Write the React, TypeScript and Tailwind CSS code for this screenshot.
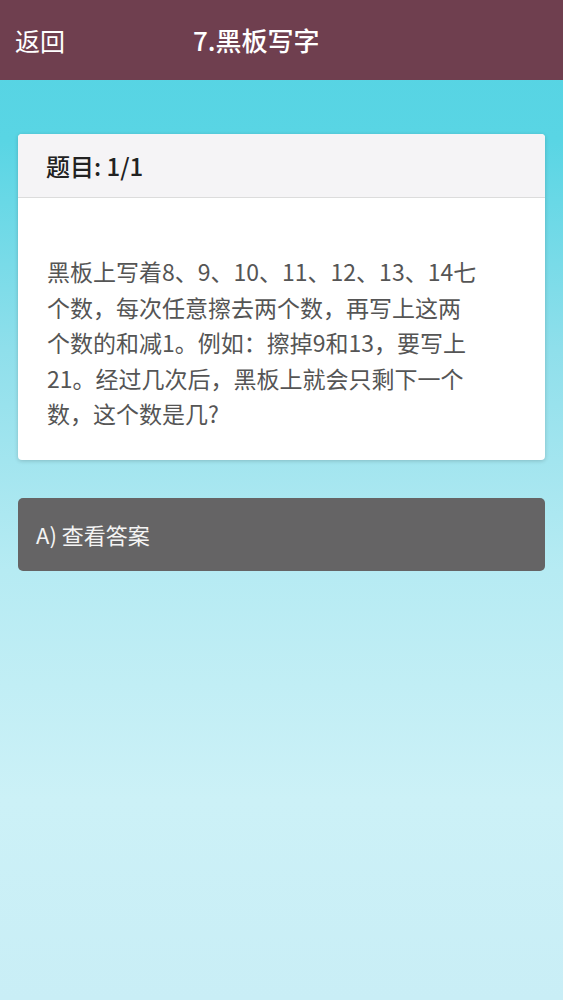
export default function App() {
  const font = { fontFamily: '"Noto Sans CJK SC", "Noto Sans", sans-serif' };
  return (
    <div
      className="w-[563px] h-[1000px] flex flex-col bg-[linear-gradient(180deg,#55d3e3_0%,#59d5e4_14%,#8fdfeb_35%,#b6ebf3_57%,#ccf1f7_80%,#c9eef6_100%)]"
      style={font}
    >
      <header className="h-[80px] bg-[#6f3f4f] flex items-center px-[15px] text-white">
        <span className="text-[25px] leading-none">返回</span>
        <span className="ml-[128px] text-[26px] font-medium leading-none">7.黑板写字</span>
      </header>
      <main className="px-[18px] pt-[54px] flex flex-col gap-[38px]">
        <section className="bg-white rounded-[4px] shadow-[0_1px_4px_rgba(0,0,0,0.18)] overflow-hidden">
          <div className="h-[64px] bg-[#f5f4f6] border-b border-[#dcdcdc] flex items-center px-[28px]">
            <h2 className="text-[24px] font-medium text-[#222] leading-none">题目: 1/1</h2>
          </div>
          <div className="px-[29px] pt-[56px] pb-[28px]">
            <p className="w-[432px] text-[23px] leading-[35.5px] text-[#555]">
              黑板上写着8、9、10、11、12、13、14七个数，每次任意擦去两个数，再写上这两个数的和减1。例如：擦掉9和13，要写上21。经过几次后，黑板上就会只剩下一个数，这个数是几?
            </p>
          </div>
        </section>
        <button className="h-[73px] bg-[#656465] rounded-[5px] flex items-center px-[18px] text-left text-[22px] text-[#f4f4f4]">
          A) 查看答案
        </button>
      </main>
    </div>
  );
}
